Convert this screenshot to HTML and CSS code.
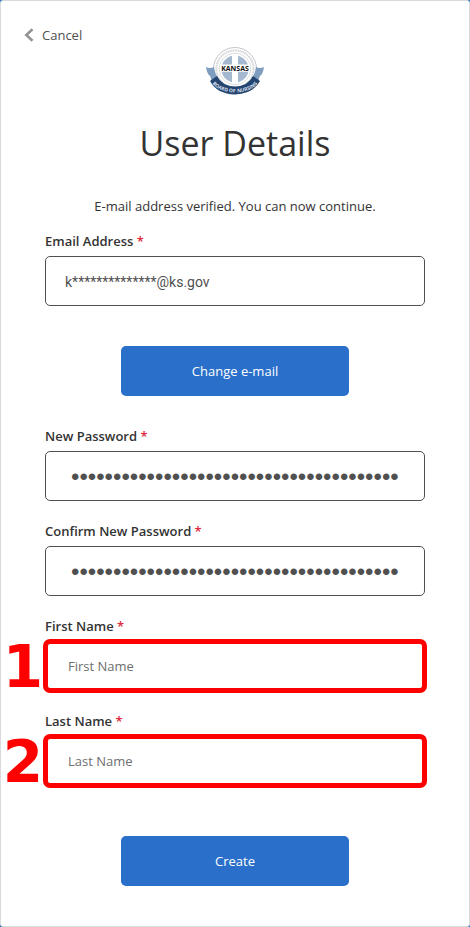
FILE: index.html
```html
<!DOCTYPE html>
<html lang="en">
<head>
    <meta charset="UTF-8">
    <meta name="viewport" content="width=device-width, initial-scale=1.0">
    <title>User Details</title>
    <link rel="stylesheet" href="styles.css">
</head>
<body>
    <main class="card">
        <a class="cancel" href="#">
            <svg class="cancel-icon" viewBox="0 0 10 14" aria-hidden="true">
                <path d="M8.500 1.200 2.300 7l6.200 5.800" fill="none" stroke="#949494" stroke-width="2.600"/>
            </svg>
            Cancel
        </a>

        <svg class="logo" viewBox="0 0 60 50" role="img" aria-label="Kansas Board of Nursing">
            <defs>
                <path id="ribbon-text" d="M5 33Q10 46 30 46.500 50 46 55 33"/>
            </defs>
            <circle cx="30" cy="23" r="21.500" fill="#fff" stroke="#c4c6ca" stroke-width="1"/>
            <circle cx="30" cy="23" r="18.600" fill="none" stroke="#cccdd0" stroke-width="2" stroke-dasharray="1 .7"/>
            <circle cx="30" cy="23" r="15.800" fill="#fff" stroke="#c9cbcf" stroke-width=".7"/>
            <circle cx="30" cy="23" r="13.600" fill="#a4b8d0"/>
            <path d="M27 8h6v30h-6zM15.500 18.500h29v7h-29z" fill="#fff"/>
            <path d="M1 21q4 2 8 0 1 7 4 11l-7 5q1-4-1-7-3-2-4-9zM59 21q-4 2-8 0-1 7-4 11l7 5q-1-4 1-7 3-2 4-9z" fill="#7f9dbf"/>
            <path d="M12 30Q17 40 30 40.500 43 40 48 30l7 5Q48 48 30 48.500 12 48 5 35z" fill="#24456f"/>
            <text class="logo-name" x="30" y="24.500">KANSAS</text>
            <text class="logo-ribbon"><textPath href="#ribbon-text" startOffset="50%">BOARD OF NURSING</textPath></text>
        </svg>

        <h1>User Details</h1>

        <form action="#" method="post">
            <p class="message">E-mail address verified. You can now continue.</p>

            <div class="field">
                <label for="email">Email Address <span class="required">*</span></label>
                <input class="email" type="text" id="email" name="email" value="k**************@ks.gov" readonly>
            </div>

            <button class="change" type="button">Change e-mail</button>

            <div class="field">
                <label for="password">New Password <span class="required">*</span></label>
                <input type="password" id="password" name="password" value="aaaaaaaaaaaaaaaaaaaaaaaaaaaaaaaaaaaaaaa">
            </div>

            <div class="field">
                <label for="confirm">Confirm New Password <span class="required">*</span></label>
                <input type="password" id="confirm" name="confirm" value="aaaaaaaaaaaaaaaaaaaaaaaaaaaaaaaaaaaaaaa">
            </div>

            <div class="field highlight">
                <label for="first-name">First Name <span class="required">*</span></label>
                <input type="text" id="first-name" name="firstName" placeholder="First Name">
                <span class="step">1</span>
            </div>

            <div class="field highlight">
                <label for="last-name">Last Name <span class="required">*</span></label>
                <input type="text" id="last-name" name="lastName" placeholder="Last Name">
                <span class="step">2</span>
            </div>

            <button class="create" type="submit">Create</button>
        </form>
    </main>
</body>
</html>
```
FILE: styles.css
```css
* {
    box-sizing: border-box;
}
body {
    margin: 0;
    background-color: #2a6fc9;
    color: #333;
    font-family: "Open Sans", "Noto Sans", sans-serif;
    font-size: 13px;
    line-height: 20px;
}
.card {
    min-height: 100vh;
    padding: 24px 44px 40px;
    background-color: #fff;
    border: 1px solid #d9dadc;
    border-radius: 3px;
}
.cancel {
    display: flex;
    align-items: center;
    gap: 8px;
    width: max-content;
    margin-left: -21px;
    color: #505050;
    text-decoration: none;
}
.cancel-icon {
    width: 10px;
    height: 14px;
}
.logo {
    display: block;
    width: 60px;
    height: 50px;
    margin: 1px auto 0;
}
.logo-name {
    font: bold 7px "Open Sans", sans-serif;
    fill: #111;
    stroke: #fff;
    stroke-width: 1px;
    paint-order: stroke;
    text-anchor: middle;
}
.logo-ribbon {
    font: bold 5px "Open Sans", sans-serif;
    fill: #d5deea;
    text-anchor: middle;
}
h1 {
    margin: 21px 0 27px;
    font-size: 34px;
    font-weight: 400;
    line-height: 52px;
    text-align: center;
}
.message {
    margin: 0 0 15px;
    text-align: center;
}
.field {
    position: relative;
    margin-bottom: 20px;
}
label {
    display: block;
    margin-bottom: 5px;
    font-weight: 600;
}
.required {
    color: #e0283c;
}
input {
    display: block;
    width: 100%;
    height: 50px;
    padding: 0 22px;
    border: 1px solid #505050;
    border-radius: 5px;
    background-color: #fff;
    color: #505050;
    font: inherit;
}
input::placeholder {
    color: #6e6e6e;
}
.email {
    padding: 2px 19px 0;
    font-family: Roboto, sans-serif;
    font-size: 14px;
}
input[type="password"] {
    padding: 1px 22px 0 25px;
    font-family: "Liberation Sans", sans-serif;
    font-size: 24px;
}
button {
    display: block;
    width: 60%;
    height: 50px;
    border: none;
    border-radius: 5px;
    background-color: #2a6fc9;
    color: #fff;
    font: inherit;
    cursor: pointer;
}
button:hover {
    background-color: #1f5cab;
}
.change {
    margin: 40px auto 30px;
}
.create {
    margin: 50px auto 0;
}
.highlight input {
    outline: 5px solid #f00;
    outline-offset: -3px;
}
/* step number beside the outlined box */
.step {
    position: absolute;
    right: 100%;
    bottom: 0;
    margin-right: 2px;
    color: #f00;
    font: bold 58px/48px "DejaVu Sans", sans-serif;
}
```
